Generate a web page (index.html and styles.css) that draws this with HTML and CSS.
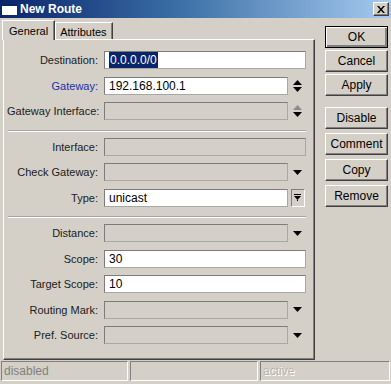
FILE: index.html
```html
<!DOCTYPE html>
<html lang="en">
<head>
  <meta charset="UTF-8" />
  <title>New Route</title>
  <link rel="stylesheet" href="styles.css">
</head>
<body>
  <div class="window">
    <div class="titlebar">
      <span class="title-icon"></span>
      <span class="title-text">New Route</span>
      <span class="title-close">
        <svg width="8" height="7" viewBox="0 0 8 7"><path d="M0 0h2l2 2.5 2-2.5h2l-3 3.5 3 3.5h-2l-2-2.5-2 2.5h-2l3-3.5z" fill="#000"/></svg>
      </span>
    </div>

    <div class="content">
      <div class="left">
        <div class="tabs">
          <div class="tab active">General</div>
          <div class="tab">Attributes</div>
        </div>
        <div class="panel">
          <div class="section">
            <div class="row">
              <label class="lbl">Destination:</label>
              <div class="field full"><span class="selected">0.0.0.0/0</span></div>
            </div>
            <div class="row">
              <label class="lbl blue">Gateway:</label>
              <div class="field short">192.168.100.1</div>
              <span class="slot">
                <svg width="11" height="14" viewBox="0 0 11 14"><polygon points="5.5,1 10,6 1,6" fill="#000"/><polygon points="1,8 10,8 5.5,13" fill="#000"/></svg>
              </span>
            </div>
            <div class="row">
              <label class="lbl">Gateway Interface:</label>
              <div class="field short off"></div>
              <span class="slot">
                <svg width="11" height="14" viewBox="0 0 11 14"><polygon points="5.5,1 10,6 1,6" fill="#8c8c8c"/><polygon points="1,8 10,8 5.5,13" fill="#000"/></svg>
              </span>
            </div>
          </div>
          <div class="sep"></div>
          <div class="section">
            <div class="row">
              <label class="lbl">Interface:</label>
              <div class="field full off"></div>
            </div>
            <div class="row">
              <label class="lbl">Check Gateway:</label>
              <div class="field short off"></div>
              <span class="slot">
                <svg width="9" height="5" viewBox="0 0 9 5"><polygon points="0,0 9,0 4.5,5" fill="#000"/></svg>
              </span>
            </div>
            <div class="row">
              <label class="lbl">Type:</label>
              <div class="field short">unicast</div>
              <span class="slot">
                <span class="dd-btn">
                  <svg width="7" height="7" viewBox="0 0 7 7"><rect x="0" y="0" width="7" height="1" fill="#000"/><polygon points="0,2 7,2 3.5,6" fill="#000"/><rect x="3" y="6" width="1" height="1" fill="#000"/></svg>
                </span>
              </span>
            </div>
          </div>
          <div class="sep"></div>
          <div class="section">
            <div class="row">
              <label class="lbl">Distance:</label>
              <div class="field short off"></div>
              <span class="slot">
                <svg width="9" height="5" viewBox="0 0 9 5"><polygon points="0,0 9,0 4.5,5" fill="#000"/></svg>
              </span>
            </div>
            <div class="row">
              <label class="lbl">Scope:</label>
              <div class="field full">30</div>
            </div>
            <div class="row">
              <label class="lbl">Target Scope:</label>
              <div class="field full">10</div>
            </div>
            <div class="row">
              <label class="lbl">Routing Mark:</label>
              <div class="field short off"></div>
              <span class="slot">
                <svg width="9" height="5" viewBox="0 0 9 5"><polygon points="0,0 9,0 4.5,5" fill="#000"/></svg>
              </span>
            </div>
            <div class="row">
              <label class="lbl">Pref. Source:</label>
              <div class="field short off"></div>
              <span class="slot">
                <svg width="9" height="5" viewBox="0 0 9 5"><polygon points="0,0 9,0 4.5,5" fill="#000"/></svg>
              </span>
            </div>
          </div>
        </div>
      </div>

      <div class="buttons">
        <div class="btn-group">
          <button class="btn default">OK</button>
          <button class="btn">Cancel</button>
          <button class="btn">Apply</button>
        </div>
        <div class="btn-group wide">
          <button class="btn">Disable</button>
          <button class="btn">Comment</button>
          <button class="btn">Copy</button>
          <button class="btn">Remove</button>
        </div>
      </div>
    </div>

    <div class="statusbar">
      <div class="status s1">disabled</div>
      <div class="status s2"></div>
      <div class="status s3">active</div>
    </div>
  </div>
</body>
</html>
```

FILE: styles.css
```css
* { box-sizing: border-box; margin: 0; padding: 0; }
body {
  font-family: 'Liberation Sans', Arial, sans-serif;
  font-size: 11px;
  color: #000;
  background: #d4d0c8;
}

.window {
  width: 391px;
  height: 384px;
  background: #d4d0c8;
  display: flex;
  flex-direction: column;
}

/* title bar */
.titlebar {
  height: 18px;
  display: flex;
  align-items: center;
  background: linear-gradient(90deg, #0a246a 0%, #3a6ea5 45%, #a6caf0 100%);
  padding: 0 2px;
}
.title-icon {
  width: 15px;
  height: 11px;
  background: #fff;
  border-top: 2px solid #0a246a;
  margin-right: 3px;
}
.title-text {
  color: #fff;
  font-weight: bold;
  font-size: 12px;
  flex: 1;
}
.title-close {
  width: 16px;
  height: 14px;
  background: #d4d0c8;
  border: 1px solid;
  border-color: #fff #404040 #404040 #fff;
  box-shadow: inset -1px -1px #808080;
  display: flex;
  align-items: center;
  justify-content: center;
}

.content {
  display: flex;
  height: 342px;
}

/* tabs + panel */
.left {
  margin-left: 3px;
  width: 312px;
  display: flex;
  flex-direction: column;
}
.tabs {
  display: flex;
  align-items: flex-end;
  height: 20px;
  margin-top: 1px;
  padding-left: 1px;
}
.tab {
  height: 17px;
  padding: 2px 5px 0 4px;
  border: 1px solid;
  border-bottom: none;
  border-color: #fff #404040 #404040 #fff;
  box-shadow: inset -1px 0 #808080;
  line-height: 14px;
  color: #000;
}
.tab.active {
  height: 20px;
  padding: 3px 6px 0 6px;
  margin-bottom: -1px;
  margin-left: -2px;
  background: #d4d0c8;
  position: relative;
  z-index: 1;
}
.panel {
  flex: 1;
  border: 1px solid;
  border-color: #fff #404040 #404040 #fff;
  box-shadow: inset -1px -1px #808080;
  padding: 11px 3px 0 3px;
}

.section {
  display: flex;
  flex-direction: column;
  gap: 7.5px;
}
.row {
  display: flex;
  align-items: center;
  height: 18px;
}
.lbl {
  width: 91px;
  text-align: right;
  margin-right: 6px;
  color: #202020;
  white-space: nowrap;
}
.lbl.blue { color: #1c2fa8; }

.field {
  height: 18px;
  background: #fff;
  border: 1px solid;
  border-color: #7c7c7c #a8a8a8 #a8a8a8 #7c7c7c;
  padding: 0 4px;
  line-height: 16px;
  font-size: 12px;
  white-space: nowrap;
}
.field.full { width: 202px; }
.field.short { width: 184px; }
.field.off { background: #d4d0c8; }
.selected {
  background: #0a246a;
  color: #fff;
  padding: 1px 1px;
}

.slot {
  width: 18px;
  display: flex;
  justify-content: center;
  align-items: center;
}
.dd-btn {
  width: 14px;
  height: 18px;
  margin-left: 1px;
  border: 1px solid;
  border-color: #808080 #fff #fff #808080;
  display: flex;
  align-items: center;
  justify-content: center;
}

.sep {
  margin: 9.5px 0 6px 1px;
  width: 298px;
  border-top: 1px solid #a8a5a0;
  border-bottom: 1px solid #fff;
}

/* right side buttons */
.buttons {
  margin-left: 10px;
  padding-top: 8px;
  width: 63px;
}
.btn-group {
  display: flex;
  flex-direction: column;
  gap: 2px;
}
.btn-group.wide {
  margin-top: 11px;
  gap: 4px;
}
.btn {
  height: 22px;
  width: 63px;
  font-family: 'Liberation Sans', Arial, sans-serif;
  font-size: 12px;
  background: #d4d0c8;
  color: #000;
  border: 1px solid;
  border-color: #fff #404040 #404040 #fff;
  box-shadow: inset -1px -1px #808080;
}
.btn.default {
  border: 1px solid #000;
  box-shadow: inset 1px 1px #fff, inset -2px -2px #808080;
}

/* status bar */
.statusbar {
  display: flex;
  gap: 2px;
  margin-top: 1px;
  padding: 0 1px;
  height: 21px;
}
.status {
  height: 20px;
  border: 1px solid;
  border-color: #808080 #fff #fff #808080;
  padding: 0 2px;
  line-height: 18px;
  color: #808080;
  font-size: 12px;
}
.s1 { width: 127px; }
.s2 { width: 128px; }
.s3 {
  flex: 1;
  color: #b8b5ae;
  text-shadow: 1px 1px #fff;
}
```
